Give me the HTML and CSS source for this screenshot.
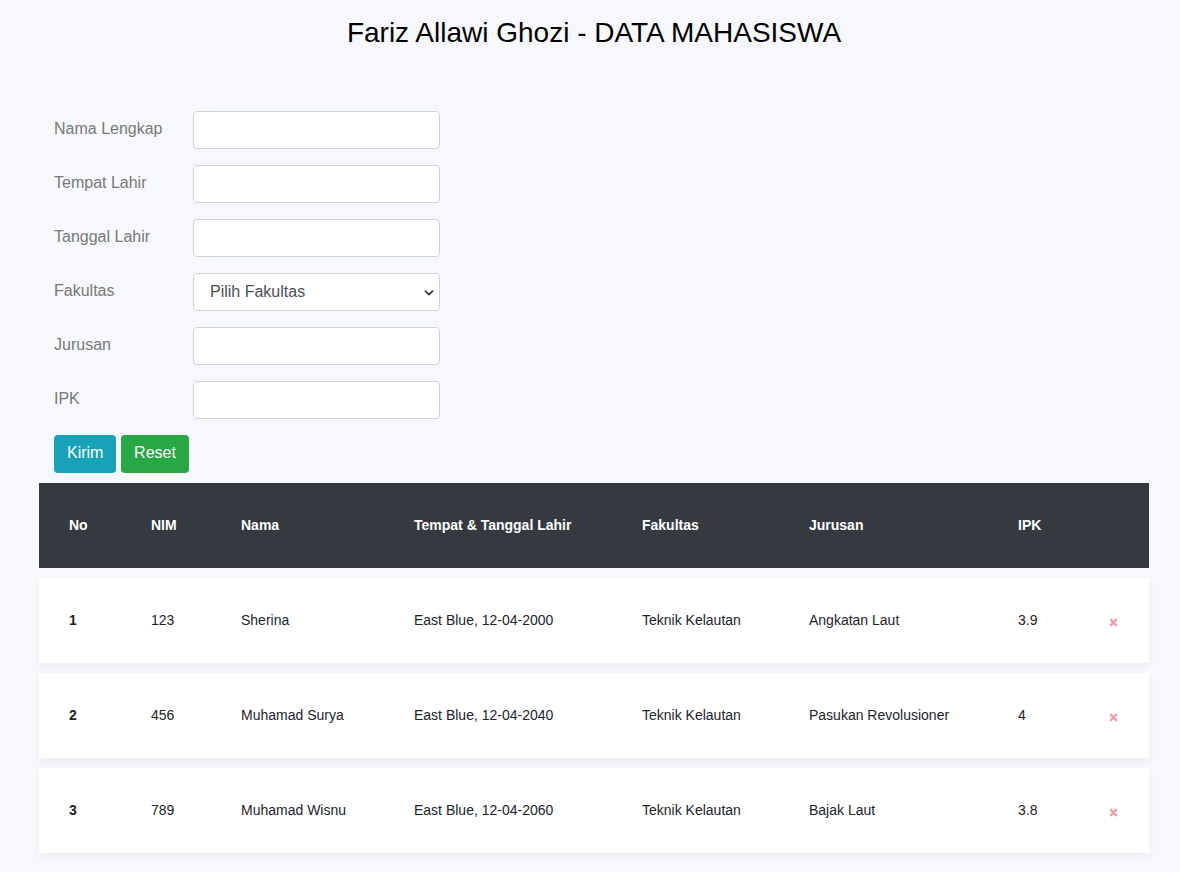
FILE: index.html
```html
<!DOCTYPE html>
<html lang="id">
<head>
<meta charset="utf-8">
<title>Data Mahasiswa</title>
<link rel="stylesheet" href="styles.css">
</head>
<body>
<div class="page">
  <h1 class="title">Fariz Allawi Ghozi - DATA MAHASISWA</h1>
  <form class="form">
    <div class="field"><label class="label">Nama Lengkap</label><input class="input" type="text"></div>
    <div class="field"><label class="label">Tempat Lahir</label><input class="input" type="text"></div>
    <div class="field"><label class="label">Tanggal Lahir</label><input class="input" type="text"></div>
    <div class="field"><label class="label">Fakultas</label>
      <div class="select">
        <span class="select-text">Pilih Fakultas</span>
        <svg class="chev" width="10" height="8" viewBox="0 0 10 8"><path d="M1.5 2.2 L5 5.6 L8.5 2.2" fill="none" stroke="#343a40" stroke-width="1.8" stroke-linecap="round" stroke-linejoin="round"/></svg>
      </div>
    </div>
    <div class="field"><label class="label">Jurusan</label><input class="input" type="text"></div>
    <div class="field"><label class="label">IPK</label><input class="input" type="text"></div>
    <div class="buttons">
      <button type="button" class="btn btn-info">Kirim</button>
      <button type="button" class="btn btn-success">Reset</button>
    </div>
  </form>

  <div class="table">
    <div class="row head">
      <div>No</div><div>NIM</div><div>Nama</div><div>Tempat &amp; Tanggal Lahir</div><div>Fakultas</div><div>Jurusan</div><div>IPK</div><div></div>
    </div>
    <div class="row body">
      <div class="no">1</div><div>123</div><div>Sherina</div><div>East Blue, 12-04-2000</div><div>Teknik Kelautan</div><div>Angkatan Laut</div><div>3.9</div>
      <div class="del"><svg width="9" height="9" viewBox="0 0 9 9"><path d="M1.2 1.2 L7.8 7.8 M7.8 1.2 L1.2 7.8" stroke="#f0a0a8" stroke-width="2.4" stroke-linecap="butt"/></svg></div>
    </div>
    <div class="row body">
      <div class="no">2</div><div>456</div><div>Muhamad Surya</div><div>East Blue, 12-04-2040</div><div>Teknik Kelautan</div><div>Pasukan Revolusioner</div><div>4</div>
      <div class="del"><svg width="9" height="9" viewBox="0 0 9 9"><path d="M1.2 1.2 L7.8 7.8 M7.8 1.2 L1.2 7.8" stroke="#f0a0a8" stroke-width="2.4" stroke-linecap="butt"/></svg></div>
    </div>
    <div class="row body">
      <div class="no">3</div><div>789</div><div>Muhamad Wisnu</div><div>East Blue, 12-04-2060</div><div>Teknik Kelautan</div><div>Bajak Laut</div><div>3.8</div>
      <div class="del"><svg width="9" height="9" viewBox="0 0 9 9"><path d="M1.2 1.2 L7.8 7.8 M7.8 1.2 L1.2 7.8" stroke="#f0a0a8" stroke-width="2.4" stroke-linecap="butt"/></svg></div>
    </div>
  </div>
</div>
</body>
</html>
```
FILE: styles.css
```css
* { box-sizing: border-box; }
html, body { margin: 0; padding: 0; }
body {
  background: #f6f8fc;
  font-family: "Liberation Sans", Arial, sans-serif;
  color: #212529;
}
.page {
  width: 1110px;
  margin-left: 39px;
}
.title {
  margin: 0;
  padding-top: 16px;
  font-size: 28px;
  font-weight: 400;
  line-height: 34px;
  text-align: center;
  color: #000;
}
.form {
  padding: 61px 0 0 15px;
  display: flex;
  flex-direction: column;
  gap: 16px;
}
.field {
  display: grid;
  grid-template-columns: 139px 247px;
  align-items: start;
}
.label {
  font-size: 16px;
  line-height: 24px;
  padding-top: 6px;
  color: #787878;
}
.input, .select {
  height: 38px;
  width: 247px;
  border: 1px solid #ced4da;
  border-radius: 4px;
  background: #fff;
  margin: 0;
  font: inherit;
}
.select {
  display: flex;
  align-items: center;
  justify-content: space-between;
  padding: 0 5px 0 16px;
}
.select-text {
  font-size: 16px;
  color: #495057;
}
.chev { display: block; margin-top: 1px; }
.buttons {
  display: flex;
  gap: 5px;
}
.btn {
  height: 38px;
  border: none;
  border-radius: 4px;
  color: #fff;
  font-family: inherit;
  font-size: 16px;
  padding: 0 13px 2px;
  margin: 0;
}
.btn-info { background: #17a2b8; width: 62px; }
.btn-success { background: #28a745; width: 68px; }
.table {
  margin-top: 10px;
  display: flex;
  flex-direction: column;
  gap: 10px;
  padding-bottom: 19px;
}
.row {
  display: grid;
  grid-template-columns: 82px 90px 173px 228px 167px 209px 90px 1fr;
  align-items: center;
  height: 85px;
  padding-left: 30px;
  padding-bottom: 2px;
  font-size: 14px;
}
.head {
  background: #343a40;
  color: #fff;
  font-weight: 700;
}
.body {
  background: #fff;
  box-shadow: 0 3px 8px rgba(30, 40, 80, 0.05);
  color: #212529;
}
.no { font-weight: 700; }
.del {
  display: flex;
  align-items: center;
  padding-top: 6px;
  padding-left: 1px;
}
.del svg { display: block; }
```
